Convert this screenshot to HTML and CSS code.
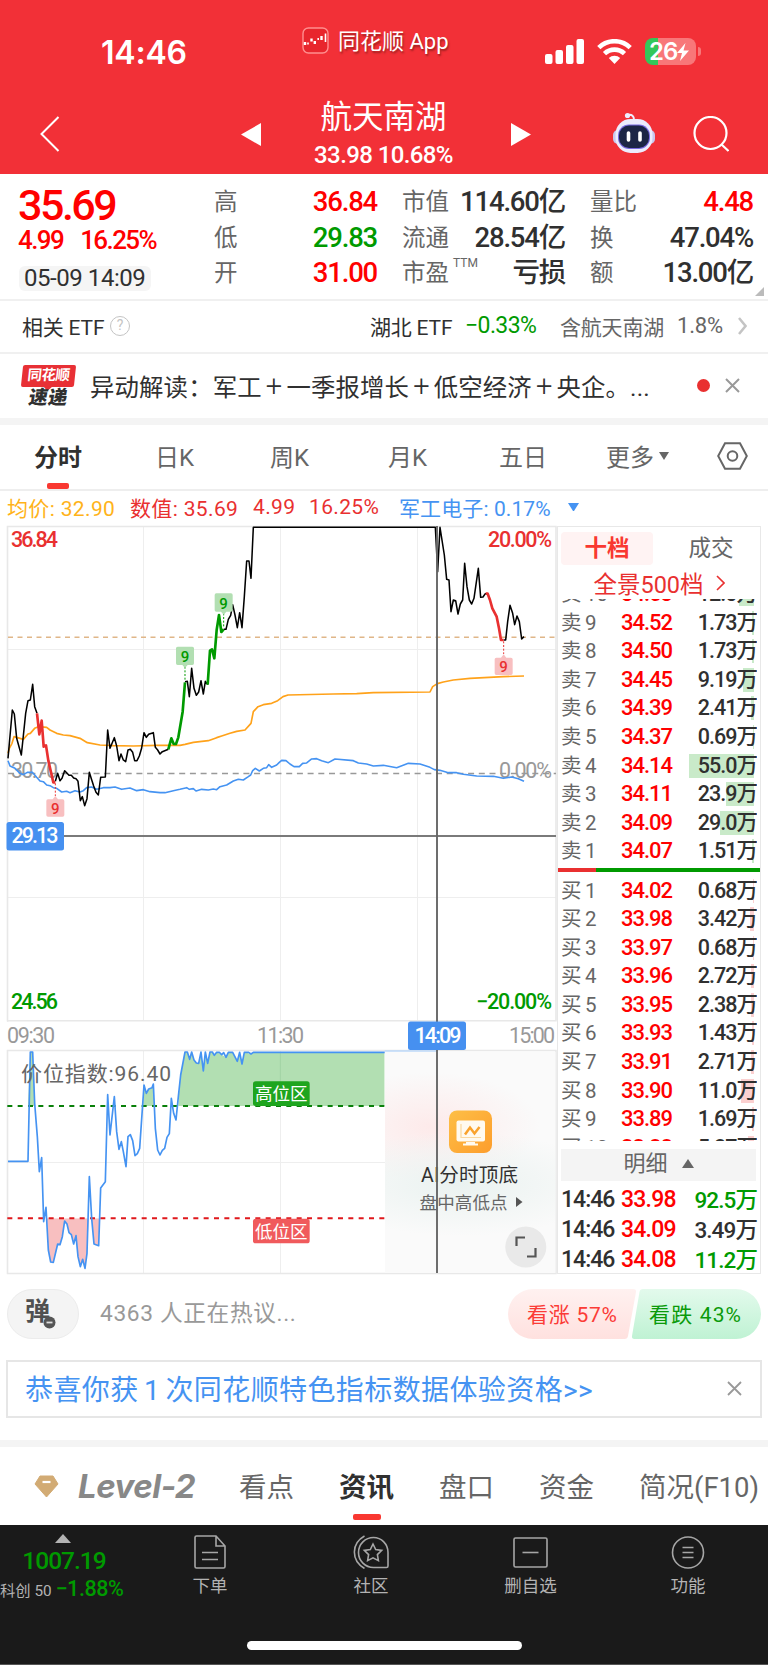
FILE: index.html
```html
<!DOCTYPE html>
<html lang="zh-CN">
<head>
<meta charset="utf-8">
<title>航天南湖</title>
<link rel="stylesheet" href="styles.css">
</head>
<body>
<div class="app">
  <header class="top">
    <div class="status">
      <span class="clock">14:46</span>
      <span class="brand">
        <svg width="27" height="27" viewBox="0 0 27 27"><rect x="1" y="1" width="25" height="25" rx="5.5" fill="#e8262d" stroke="#ff8f8f" stroke-width="1.4"/><path d="M3 18v-3M9.500 14.500v-3M12.800 17v-3M19.500 13V9" stroke="#fff" stroke-width="2.400"/><path d="M6 17.500v-2M16.200 13v-2M23.500 15V6.500" stroke="#fff" stroke-width="1.600"/></svg>
        <b>同花顺 App</b>
      </span>
      <svg class="signal" width="40" height="26" viewBox="0 0 40 26" fill="#fff"><rect x="0" y="15" width="7.500" height="10" rx="2"/><rect x="10.500" y="11" width="7.500" height="14" rx="2"/><rect x="21" y="6" width="7.500" height="19" rx="2"/><rect x="31.500" y="0" width="7.500" height="25" rx="2"/></svg>
      <svg class="wifi" width="35" height="25" viewBox="0 0 35 25" fill="none" stroke="#fff" stroke-width="4.600"><path d="M1.800 8.600a22.500 22.500 0 0 1 31.400 0"/><path d="M7.500 14.600a14.500 14.500 0 0 1 20 0"/><path d="M17.500 25l-5.700-6a8.500 8.500 0 0 1 11.400 0z" fill="#fff" stroke="none"/></svg>
      <span class="battery"><i>26</i><svg width="12" height="18" viewBox="0 0 12 18"><path d="M8.500 0L0 10h5l-2 8 9-10.500H6.500z" fill="#fff"/></svg></span>
    </div>
    <div class="nav">
      <svg width="20" height="36" viewBox="0 0 20 36" fill="none" stroke="#fff" stroke-width="2"><path d="M18.500 1L1.500 18l17 17"/></svg>
      <svg width="20" height="23" viewBox="0 0 20 23" fill="#fff"><path d="M20 0v23L0 11.500z"/></svg>
      <div class="title"><h1>航天南湖</h1><p class="num">33.98 10.68%</p></div>
      <svg width="20" height="23" viewBox="0 0 20 23" fill="#fff"><path d="M0 0v23l20-11.500z"/></svg>
      <svg class="bot" width="44" height="42" viewBox="0 0 44 42"><circle cx="15.500" cy="3.500" r="2.600" fill="#eef"/><path d="M16 3q6-1 6 5" fill="none" stroke="#eef" stroke-width="2"/><rect x="1" y="18" width="42" height="14" rx="5" fill="#c9c8ee"/><rect x="3.500" y="7" width="37" height="34" rx="15" fill="#ececfd"/><rect x="6" y="12.500" width="32" height="24.500" rx="11" fill="#7768df"/><rect x="7" y="13.500" width="30" height="22.500" rx="10" fill="#1c2545"/><path d="M16.500 21v7M28 21v7" stroke="#fff" stroke-width="3.600" stroke-linecap="round"/></svg>
      <svg width="36" height="37" viewBox="0 0 36 37" fill="none" stroke="#fff" stroke-width="2.200"><circle cx="17.500" cy="17" r="16"/><path d="M28.500 28.500l7 6.500"/></svg>
    </div>
  </header>

  <section class="quote">
    <div class="last"><strong class="num">35.69</strong><p class="num"><span>4.99</span><span>16.25%</span></p><time class="num">05-09 14:09</time></div>
    <dl class="stats c1">
      <dt>高</dt><dd class="up">36.84</dd><dt>低</dt><dd class="down">29.83</dd><dt>开</dt><dd class="up">31.00</dd>
    </dl>
    <dl class="stats c2">
      <dt>市值</dt><dd>114.60亿</dd><dt>流通</dt><dd>28.54亿</dd><dt>市盈<sup>TTM</sup></dt><dd>亏损</dd>
    </dl>
    <dl class="stats c3">
      <dt>量比</dt><dd class="up">4.48</dd><dt>换</dt><dd>47.04%</dd><dt>额</dt><dd>13.00亿</dd>
    </dl>
    <span class="corner"></span>
  </section>

  <section class="etf">
    <span class="name">相关 ETF</span><span class="help">?</span>
    <span class="fund">湖北 ETF</span><span class="down rate num">−0.33%</span>
    <span class="grey hold">含航天南湖</span><span class="grey pct">1.8%</span>
    <svg width="9" height="18" viewBox="0 0 9 18" fill="none" stroke="#c4c4c4" stroke-width="2.500"><path d="M1 1l6.500 8L1 17"/></svg>
  </section>

  <section class="flash">
    <div class="badge"><span>同花顺</span><b>速递</b></div>
    <p>异动解读：军工<i>+</i>一季报增长<i>+</i>低空经济<i>+</i>央企。...</p>
    <i class="dot"></i>
    <svg width="15" height="15" viewBox="0 0 15 15" stroke="#999" stroke-width="2"><path d="M1 1l13 13M14 1L1 14"/></svg>
  </section>

  <nav class="periods">
    <b class="on">分时</b><span>日K</span><span>周K</span><span>月K</span><span>五日</span><span class="more">更多<i></i></span>
    <svg width="31" height="28" viewBox="0 0 31 28" fill="none" stroke="#666" stroke-width="2"><path d="M8 1.200h15L29.800 14 23 26.800H8L1.200 14z"/><circle cx="15.500" cy="14" r="4.800"/></svg>
  </nav>

  <div class="legend"><span class="avg">均价: 32.90</span><span class="val">数值: 35.69</span><span class="val">4.99</span><span class="val">16.25%</span><span class="sector">军工电子: 0.17%</span><i></i></div>

  <main class="board">
    <svg class="chart" width="557" height="750" viewBox="0 525 557 750">
      <defs>
        <clipPath id="hi"><rect x="24" y="240" width="1130" height="168"/></clipPath>
        <clipPath id="lo"><rect x="24" y="745" width="1130" height="160"/></clipPath>
        <radialGradient id="pink"><stop offset="0" stop-color="#fdeaea"/><stop offset="1" stop-color="#fdeaea" stop-opacity="0"/></radialGradient>
        <radialGradient id="mint"><stop offset="0" stop-color="#eaf2f0"/><stop offset="1" stop-color="#eaf2f0" stop-opacity="0"/></radialGradient>
        <linearGradient id="amber" x2="1" y2="1"><stop offset="0" stop-color="#fdbf47"/><stop offset="1" stop-color="#fd9d2c"/></linearGradient>
      </defs>
      <path class="grid" d="M143.500 526V1021M280.500 526V1021M417.500 526V1021M7 649.500H556M7 897.500H556M143.500 1050V1273M280.500 1050V1273M7 1162.500H385"/>
      <path class="frame" d="M7.500 1021V526.500H556V1020.800H7zM556 1050.500H7.500V1273.500H556z"/>
      <path d="M8 637.300H556" stroke="#e0b688" stroke-width="1.400" stroke-dasharray="5 4.500"/>
      <path d="M8 773.500H556" stroke="#999" stroke-width="1.300" stroke-dasharray="6 4.700"/>
      <g class="axis mid"><text x="11" y="777.500" textLength="47">30.70</text><text x="499" y="777.500" textLength="53">0.00%</text></g>
      <g transform="translate(0 520) scale(.33333)" fill="none" stroke-width="4.600" stroke-linejoin="round">
        <polyline stroke="#ffa21a" stroke-width="5" points="24,700 28,685 36,670 42,650 50,652 70,658 84,642 91,640 104,625 115,620 140,622 150,630 170,640 190,645 210,647 240,655 262,668 300,675 340,677 400,678 470,676 540,676 555,673 580,667 625,662 650,653 665,648 690,640 710,634 735,630 753,610 760,575 774,560 790,554 815,550 833,542 849,530 864,525 1000,522 1070,521 1120,518 1290,516 1298,500 1312,491 1330,486 1360,480 1410,475 1510,470 1572,468"/>
        <polyline stroke="#4593f2" stroke-width="4.800" points="24,722 30,738 45,745 60,760 70,764 82,757 97,757 110,772 120,783 130,785 140,795 150,797 160,803 170,805 185,816 200,814 210,818 225,812 240,816 250,812 260,803 275,801 290,808 310,803 330,803 345,801 365,808 390,804 410,812 430,809 450,815 480,818 495,818 520,812 540,808 560,803 568,808 580,806 588,813 605,808 625,810 640,807 650,809 660,800 680,795 700,783 715,778 730,780 745,770 752,765 758,752 766,745 778,753 790,745 800,743 806,734 815,742 830,735 838,727 845,721 858,722 870,732 882,740 898,740 908,730 920,729 935,717 950,716 965,722 985,728 1005,717 1060,722 1075,729 1100,732 1120,738 1150,736 1190,743 1225,730 1260,732 1290,742 1303,749 1320,751 1345,758 1370,758 1390,763 1430,768 1480,769 1510,775 1535,771 1555,776 1572,784"/>
        <polyline stroke="#000" points="24,715 37,570 43,582 50,655 64,705 77,580 84,542 91,540 98,493 104,560 111,580"/>
        <polyline stroke="#000" points="166,784 173,760 180,782 186,775 194,752 207,766 214,766 221,774 228,776 234,784 241,842 247,830 254,857 261,836 268,757 274,776 281,798 288,817 295,825 302,772 316,771 323,630 330,685 343,653 350,678 357,722 363,702 370,720 377,725 384,690 391,688 398,697 404,722 411,722 418,708 425,684 432,638 439,652 446,643 460,638 466,682 473,690 480,702 487,695 505,688"/>
        <polyline stroke="#000" points="555,485 562,484 568,530 575,445 582,505 589,526 596,516 603,482 610,522 616,484 623,494"/>
        <polyline stroke="#000" points="671,328 678,328 685,298 692,286 698,254 705,285 712,323 719,278 726,323 733,230 740,123 747,123 753,175 760,22 1306,22 1313,155 1320,22 1333,105 1340,178 1347,180 1353,275 1360,240 1367,242 1374,282 1381,252 1388,240 1394,130 1401,200 1408,240 1415,252 1422,235 1435,145 1442,232 1449,231 1456,221 1463,221"/>
        <polyline stroke="#000" points="1511,360 1517,360 1523,305 1530,256 1538,280 1544,314 1551,288 1558,305 1565,357 1572,350"/>
        <g stroke="#e93030" stroke-width="8"><polyline points="111,580 118,643 125,602 131,680 138,676 145,722 160,787 166,787"/><polyline points="1457,221 1463,221 1470,240 1477,265 1490,290 1497,325 1503,360 1511,360"/></g>
        <g stroke="#009a00" stroke-width="8"><polyline points="505,688 514,655 521,672 528,672 535,652 548,575 555,487"/><polyline points="623,494 630,392 636,388 643,415 650,330 657,285 664,336 671,328"/></g>
        <path d="M555 440v44M671 280v44" stroke="#009a00" stroke-width="3" stroke-dasharray="6 5"/>
        <path d="M166 790v38M1511 364v38" stroke="#e93030" stroke-width="3" stroke-dasharray="6 5"/>
        <path fill="#b2dfb2" d="M533 380h44q5 0 5 5v45q0 5-5 5h-14l-8 9-8-9h-14q-5 0-5-5v-45q0-5 5-5zM649 220h44q5 0 5 5v45q0 5-5 5h-14l-8 9-8-9h-14q-5 0-5-5v-45q0-5 5-5z"/>
        <path fill="#f8bfc0" d="M144 890h44q5 0 5-5v-42q0-5-5-5h-14l-8-10-8 10h-14q-5 0-5 5v42q0 5 5 5zM1489 465h44q5 0 5-5v-42q0-5-5-5h-14l-8-10-8 10h-14q-5 0-5 5v42q0 5 5 5z"/>
      </g>
      <g class="nine"><text x="185" y="661.500" fill="#009a00">9</text><text x="223.600" y="608.500" fill="#009a00">9</text><text x="55.300" y="814" fill="#e93030">9</text><text x="503.500" y="672" fill="#e93030">9</text></g>
      <g class="axis edge"><text x="11" y="546.500" textLength="47" fill="#e93030">36.84</text><text x="488" y="546.500" textLength="64" fill="#e93030">20.00%</text><text x="11" y="1008.500" textLength="47" fill="#009a00">24.56</text><text x="476" y="1008.500" textLength="76" fill="#009a00">−20.00%</text></g>
      <g class="axis time"><text x="7" y="1042.500" textLength="48">09:30</text><text x="257" y="1042.500" textLength="47">11:30</text><text x="509" y="1042.500" textLength="46">15:00</text></g>

      <g transform="translate(0 970) scale(.33333)">
        <g>
          <polygon clip-path="url(#hi)" fill="#b2dfb2" points="24,408 84,408 91,246 98,246 104,408 419,408 429,408 432,345 439,370 446,357 456,353 460,342 463,408 535,408 537,370 542,315 555,246 562,246 569,268 575,246 582,270 589,279 596,280 603,246 610,303 616,246 623,280 630,246 637,246 643,256 650,247 665,254 678,262 685,247 698,247 712,274 719,247 726,282 733,247 753,252 760,247 1154,247 1154,408"/>
          <polygon clip-path="url(#lo)" fill="#f8bfc0" points="141,745 145,840 152,876 160,877 173,822 180,824 187,800 194,753 201,762 207,788 214,794 221,822 228,797 234,860 241,890 248,868 255,895 261,850 266,745 275,745 282,822 296,827 299,745"/>
        </g>
        <path d="M841 246V408" stroke="#a2d3a4" stroke-width="3"/>
        <path d="M22 408H1154" stroke="#0a800a" stroke-width="6" stroke-dasharray="15 16"/>
        <path d="M22 745H1154" stroke="#e0181c" stroke-width="6" stroke-dasharray="15 16"/>
        <path d="M1154 243H1312" stroke="#bcd9f8" stroke-width="4"/>
        <polyline fill="none" stroke="#4593f2" stroke-width="5" stroke-linejoin="round" points="24,574 84,574 91,246 98,246 104,400 112,500 118,605 125,563 131,755 138,712 145,840 152,876 160,877 173,822 180,824 187,800 194,753 201,762 207,788 214,794 221,822 228,797 234,860 241,890 248,868 255,895 261,850 268,620 275,745 282,822 296,827 302,654 316,635 323,374 330,495 343,380 350,485 357,538 364,515 370,545 378,590 384,500 391,494 398,512 405,557 412,551 419,535 432,345 439,370 446,357 456,353 460,342 466,475 473,540 480,555 487,541 494,535 501,502 508,491 514,385 521,430 528,450 535,380 542,315 555,246 562,246 569,268 575,246 582,270 589,279 596,280 603,246 610,303 616,246 623,280 630,246 637,246 643,256 650,247 658,247 665,254 671,248 678,262 685,247 698,247 712,274 719,247 726,282 733,247 746,247 753,252 760,247 1154,247"/>
        <rect x="759" y="334" width="170" height="74" rx="8" fill="#1fa51f"/>
        <rect x="759" y="746" width="170" height="74" rx="8" fill="#f05a5c"/>
      </g>
      <text class="idx" x="21" y="1080.500" textLength="150">价位指数:96.40</text>
      <g class="zone"><text x="281.300" y="1100">高位区</text><text x="281.300" y="1237.500">低位区</text></g>

      <rect x="385" y="1052" width="170.500" height="221" fill="#fafafa"/>
      <svg class="glow" x="385" y="1052" width="170.500" height="221" viewBox="0 0 170.500 221"><ellipse cx="45" cy="75" rx="110" ry="55" fill="url(#pink)"/><ellipse cx="75" cy="132" rx="150" ry="52" fill="url(#mint)"/></svg>
      <rect x="449" y="1110.500" width="43" height="42.500" rx="8" fill="url(#amber)"/>
      <rect x="456.500" y="1120.500" width="28.500" height="21" rx="2" fill="#fffaf0"/>
      <path d="M466 1142h9v1.500h3v2h-15v-2h3z" fill="#fffaf0"/>
      <path d="M461 1124v13.500h20" fill="none" stroke="#fbd9a0" stroke-width="1.200"/>
      <path d="M465 1134.500l5-7 4.500 6 5-6.500" fill="none" stroke="#f9a22d" stroke-width="2.500"/>
      <text class="ai" x="421" y="1182" textLength="97">AI分时顶底</text>
      <text class="ai2" x="419.500" y="1208.500" textLength="88">盘中高低点</text>
      <path d="M516 1197l6.500 5-6.500 5z" fill="#555"/>
      <circle cx="525.800" cy="1247" r="20.500" fill="#e9e9e9"/>
      <path d="M516.500 1246v-8.500h8.500M527 1256.500h8.500V1248" fill="none" stroke="#555" stroke-width="2.200"/>

      <path d="M7 836H556" stroke="#7a7a7a" stroke-width="1.900"/>
      <path d="M437 526V1273" stroke="#666" stroke-width="1.900"/>
      <rect x="6.500" y="822" width="57.500" height="28.500" rx="2.500" fill="#4690f0"/>
      <rect x="408" y="1021.500" width="58" height="28.500" rx="2.500" fill="#4690f0"/>
      <g class="axis tag"><text x="11.500" y="843" textLength="47">29.13</text><text x="414.500" y="1042.500" textLength="47">14:09</text></g>
    </svg>

    <aside class="book">
      <div class="switch"><b>十档</b><span>成交</span></div>
      <a class="all">全景500档<svg width="9" height="16" viewBox="0 0 9 16" fill="none" stroke="#e93030" stroke-width="1.600"><path d="M1 1l7 7-7 7"/></svg></a>
      <div class="asks">
        <p><span>卖 10</span><b>34.53</b><em><i style="width:15px"></i>12.0万</em></p>
        <p><span>卖 9</span><b>34.52</b><em><i style="width:2px"></i>1.73万</em></p>
        <p><span>卖 8</span><b>34.50</b><em><i style="width:2px"></i>1.73万</em></p>
        <p><span>卖 7</span><b>34.45</b><em><i style="width:11px"></i>9.19万</em></p>
        <p><span>卖 6</span><b>34.39</b><em><i style="width:3px"></i>2.41万</em></p>
        <p><span>卖 5</span><b>34.37</b><em><i style="width:1px"></i>0.69万</em></p>
        <p><span>卖 4</span><b>34.14</b><em><i style="width:65px"></i>55.0万</em></p>
        <p><span>卖 3</span><b>34.11</b><em><i style="width:28px"></i>23.9万</em></p>
        <p><span>卖 2</span><b>34.09</b><em><i style="width:34px"></i>29.0万</em></p>
        <p><span>卖 1</span><b>34.07</b><em><i style="width:2px"></i>1.51万</em></p>
      </div>
      <div class="ratio"><i></i></div>
      <div class="bids">
        <p><span>买 1</span><b>34.02</b><em><i style="width:1px"></i>0.68万</em></p>
        <p><span>买 2</span><b>33.98</b><em><i style="width:4px"></i>3.42万</em></p>
        <p><span>买 3</span><b>33.97</b><em><i style="width:1px"></i>0.68万</em></p>
        <p><span>买 4</span><b>33.96</b><em><i style="width:3px"></i>2.72万</em></p>
        <p><span>买 5</span><b>33.95</b><em><i style="width:3px"></i>2.38万</em></p>
        <p><span>买 6</span><b>33.93</b><em><i style="width:2px"></i>1.43万</em></p>
        <p><span>买 7</span><b>33.91</b><em><i style="width:3px"></i>2.71万</em></p>
        <p><span>买 8</span><b>33.90</b><em><i style="width:13px"></i>11.0万</em></p>
        <p><span>买 9</span><b>33.89</b><em><i style="width:2px"></i>1.69万</em></p>
        <p><span>买 10</span><b>33.88</b><em><i style="width:6px"></i>5.27万</em></p>
      </div>
      <div class="detail">明细<i></i></div>
      <div class="ticks">
        <p><span>14:46</span><b>33.98</b><em class="down">92.5万</em></p>
        <p><span>14:46</span><b>34.09</b><em>3.49万</em></p>
        <p><span>14:46</span><b>34.08</b><em class="down">11.2万</em></p>
      </div>
    </aside>
  </main>

  <section class="talk">
    <div class="danmu">弹<svg width="13" height="13" viewBox="0 0 13 13"><circle cx="6.500" cy="6.500" r="6" fill="#555"/><path d="M3.500 6.500h6" stroke="#ddd" stroke-width="1.800"/></svg></div>
    <span class="count">4363 人正在热议...</span>
    <svg class="vote" width="253" height="50" viewBox="0 0 253 50">
      <defs><linearGradient id="vr" x2="0" y2="1"><stop offset="0" stop-color="#fff1f0"/><stop offset="1" stop-color="#ffe1df"/></linearGradient><linearGradient id="vg" x2="0" y2="1"><stop offset="0" stop-color="#e3faec"/><stop offset="1" stop-color="#bff2d3"/></linearGradient></defs>
      <path d="M25 0h100q3.500 0 3 3l-8 44q-.5 3-3.500 3H25a25 25 0 0 1 0-50z" fill="url(#vr)"/>
      <path d="M228 0h-93q-3 0-3.500 3l-7.500 44q-.5 3 2.500 3H228a25 25 0 0 0 0-50z" fill="url(#vg)"/>
      <text x="19" y="32.500" textLength="90" fill="#fb3b36">看涨 57%</text><text x="141" y="32.500" textLength="92" fill="#0a9a0a">看跌 43%</text>
    </svg>
  </section>

  <section class="notice"><span>恭喜你获 1 次同花顺特色指标数据体验资格&gt;&gt;</span><svg width="15" height="15" viewBox="0 0 15 15" stroke="#999" stroke-width="1.800"><path d="M1 1l13 13M14 1L1 14"/></svg></section>

  <nav class="sections">
    <svg class="gem" width="25" height="23" viewBox="0 0 25 23"><path d="M6 1h13l5 8-11.500 13L1 9z" fill="#d2ab74" stroke="#d2ab74" stroke-linejoin="round"/><path d="M8.500 7h8" stroke="#fff" stroke-width="2.200"/></svg>
    <i class="lv">Level-2</i><span>看点</span><b class="on">资讯</b><span>盘口</span><span>资金</span><span class="f10">简况(F10)</span>
  </nav>

  <footer class="tabbar">
    <div class="index"><i></i><strong class="num">1007.19</strong><p>科创 50 <span class="num">−1.88%</span></p></div>
    <div class="item"><svg width="32" height="34" viewBox="0 0 32 34"><path d="M22 1H2.500Q1 1 1 2.500v29Q1 33 2.500 33h27q1.500 0 1.500-1.500V11zM22 1v10h9M8 17.500h16M8 24.500h16"/></svg>下单</div>
    <div class="item"><svg width="36" height="34" viewBox="0 0 36 34"><path d="M20.500 2.500a15 15 0 0 0 0 30H33.500q1.500 0 1.500-1.500V17.500A14.500 15 0 0 0 20.500 2.500zM11.500 1C-2 8.500-2 25.500 11.500 33.500M20 9l2.700 5.500 6 .9-4.300 4.200 1 6-5.400-2.800-5.400 2.800 1-6-4.300-4.200 6-.9z"/></svg>社区</div>
    <div class="item"><svg width="35" height="34" viewBox="0 0 35 34"><rect x="1" y="3" width="33" height="29" rx="1.500"/><path d="M9.500 17.500h16"/></svg>删自选</div>
    <div class="item"><svg width="34" height="34" viewBox="0 0 34 34"><circle cx="17" cy="17.500" r="15.500"/><path d="M11.500 12.500h11M11.500 17.500h11M11.500 22.500h11"/></svg>功能</div>
    <span class="home"></span>
  </footer>
</div>
</body>
</html>
```

FILE: styles.css
```css
* { box-sizing: border-box; }
body, h1, p, dl, dd { margin: 0; }
body { width: 768px; background: #fff; color: #303030; font-family: Roboto, "Noto Sans CJK SC", sans-serif; }
svg { display: block; flex: none; }
i, em { font-style: normal; }
.app { height: 1665px; display: flex; flex-direction: column; overflow: hidden; }
.app > * { flex: none; }
.num { font-weight: 500; letter-spacing: -.03em; }
.up { color: #f00; }
.down { color: #009a00 !important; }

.top { height: 174px; background: #f23037; color: #fff; }
.status { height: 90px; padding: 0 68px 0 101px; display: grid; grid-template-columns: 201px 243px 52px 48px 56px; align-items: start; }
.clock { margin-top: 33px; font: 600 32px/40px Inter, sans-serif; letter-spacing: -.2px; }
.brand { margin-top: 27px; display: flex; gap: 9px; height: 27px; align-items: center; white-space: nowrap; }
.brand b { margin-top: -4px; font-weight: 400; font-size: 22px; text-shadow: 1px 2px 2px #9c2020; }
.signal { margin-top: 39px; }
.wifi { margin-top: 39px; }
.battery { position: relative; margin-top: 38px; width: 51px; height: 27px; border-radius: 8px; display: flex; align-items: center; padding-left: 4px; background: linear-gradient(90deg, #33c759 0 13px, #f87779 13px); }
.battery i { font: 600 24px/27px Inter, sans-serif; letter-spacing: -1px; }
.battery::after { content: ""; position: absolute; right: -5px; top: 9px; width: 3px; height: 9px; border-radius: 0 3px 3px 0; background: #f87779; }
.nav { height: 84px; padding-left: 40px; display: grid; grid-template-columns: 201px 55px 215px 101px 81px 40px; align-items: center; }
.nav > svg:nth-of-type(n) { margin-top: 4px; }
.nav > .bot:nth-of-type(n) { margin-top: 1px; }
.title { width: 175px; text-align: center; }
.title h1 { font-size: 31.500px; line-height: 38px; font-weight: 400; margin-top: 3px; }
.title p { font-size: 24px; line-height: 28px; margin-top: 4px; letter-spacing: -.6px; }

.quote { position: relative; height: 127px; padding: 10px 15px 0 18px; display: grid; grid-template-columns: 196px 188px 188px 163px; border-bottom: 2px solid #f0f0f0; }
.c1 { width: 163px; }
.last { color: #f00; }
.last strong { display: block; font-size: 43px; line-height: 42px; letter-spacing: -2.500px; }
.last p { font-size: 26px; line-height: 30px; margin-top: -1px; letter-spacing: -1.600px; display: flex; gap: 17px; }
.last time { display: inline-block; margin: 11px 0 0 1px; height: 25px; line-height: 25px; font-size: 24px; color: #303030; background: #f5f5f5; border-radius: 6px; padding: 0 6px 0 5px; letter-spacing: -.45px; font-weight: 400; }
.stats { display: grid; grid-template-columns: 50px 1fr; grid-auto-rows: 35.500px; line-height: 36px; }
.stats dt { font-size: 23.500px; color: #666; white-space: nowrap; }
.stats dd { text-align: right; font-size: 27.500px; font-weight: 500; letter-spacing: -1.200px; white-space: nowrap; }
.c2 { width: 163px; }
.stats sup { font-size: 12px; line-height: 0; vertical-align: 14px; margin-left: 4px; }
.corner { position: absolute; right: 4px; bottom: 3px; border-left: 9px solid transparent; border-bottom: 9px solid #bbb; }

.etf { height: 53px; border-bottom: 2px solid #f0f0f0; display: grid; grid-template-columns: 88px 260px 95px 95px 117px 61px 9px; padding: 0 0 2px 22px; align-items: center; font-size: 21px; letter-spacing: -.2px; white-space: nowrap; }
.help { width: 20px; height: 20px; border: 1.500px solid #c4c4c4; border-radius: 50%; color: #c4c4c4; font-size: 14px; line-height: 17px; text-align: center; }
.etf .rate { font-size: 23px; letter-spacing: -.6px; font-weight: 400; }
.grey { color: #666; }
.pct { font-size: 22px; }

.flash { height: 71px; border-bottom: 7px solid #f4f4f4; display: grid; grid-template-columns: 68px 607px 28px 15px; padding: 0 0 2px 22px; align-items: center; }
.flash p { font-size: 24.400px; white-space: nowrap; letter-spacing: .15px; }
.flash p i { display: inline-block; width: 24.600px; text-align: center; font-size: 29px; line-height: 20px; font-weight: 300; }
.badge { width: 53px; text-align: center; line-height: 21px; margin-top: 2px; }
.badge span { position: relative; display: block; height: 22px; border-radius: 2px; background: #e83035; color: #fff; font-size: 14.500px; font-weight: 700; transform: skewX(-6deg); letter-spacing: -.5px; }
.badge span::after { content: ""; position: absolute; left: 23px; top: 22px; border: 4px solid transparent; border-top-color: #e83035; }
.badge b { display: block; font-size: 19px; font-weight: 900; transform: skewX(-10deg); letter-spacing: .5px; }
.dot { width: 13px; height: 13px; border-radius: 50%; background: #e93030; }

.periods { height: 66px; border-bottom: 2px solid #eee; display: grid; grid-template-columns: 121px 115px 118px 111px 107px 111px 31px; padding: 0 0 3px 34px; align-items: center; font-size: 24px; color: #666; }
.on { position: relative; color: #303030; }
.on::after { content: ""; position: absolute; left: 13px; bottom: -16px; width: 22px; height: 6px; border-radius: 2px; background: #f93831; }
.more { display: flex; align-items: center; gap: 5px; }
.more i { border: 5.500px solid transparent; border-top: 8px solid #666; border-bottom: 0; }

.legend { height: 34px; padding: 0 0 2px 7px; display: grid; grid-template-columns: 123px 123px 56px 90px 169px 11px; align-items: center; font-size: 21px; letter-spacing: .35px; white-space: nowrap; }
.avg { color: #ffb31a; }
.val { color: #e93030; }
.sector { color: #4593f2; letter-spacing: .1px; }
.legend i { border: 5.500px solid transparent; border-top: 8px solid #4593f2; border-bottom: 0; }

.board { display: grid; grid-template-columns: 557px 205px; height: 750px; }
.glow { overflow: hidden; }
.grid { stroke: #eee; fill: none; }
.frame { stroke: #e8e8e8; stroke-width: 1.600; fill: none; }
.axis { font-size: 21.500px; letter-spacing: 0; }
.edge { font-weight: 500; }
.mid { fill: #999; }
.time { fill: #999; }
.tag { fill: #fff; font-weight: 500; }
.nine { font-size: 15px; font-weight: 500; text-anchor: middle; }
.idx { font-size: 21px; fill: #666; }
.zone { font-size: 17.500px; fill: #fff; text-anchor: middle; }
.ai { font-size: 19.600px; fill: #303030; }
.ai2 { font-size: 17.500px; fill: #666; }

.book { border: 1.500px solid #e8e8e8; margin: 1px 0; width: 204px; height: 748px; padding: 5px 3px 0; }
.book p { display: grid; grid-template-columns: 60px 70px 1fr; height: 28.600px; line-height: 28.600px; font-size: 22px; white-space: nowrap; }
.book p span { color: #666; font-size: 20.500px; word-spacing: -1.500px; }
.book p b { color: #f00; font-weight: 500; letter-spacing: -1px; }
.book p em { position: relative; text-align: right; font-weight: 500; letter-spacing: -1px; font-size: 21.500px; }
.book em i { position: absolute; right: 3px; top: 2px; height: 24px; background: #c9eac9; z-index: -1; }
.book .bids em i { background: #fbd0d0; }
.switch { display: grid; grid-template-columns: 92px 1fr; height: 33px; line-height: 32px; text-align: center; font-size: 22.500px; color: #666; }
.switch b { background: #fff3f3; color: #f93831; border-radius: 4px; }
.switch span { padding-left: 12px; }
.all { display: flex; align-items: center; justify-content: center; gap: 12px; height: 32px; margin-top: 2px; font-size: 23.500px; color: #e93030; white-space: nowrap; }
.asks { height: 268px; padding-bottom: 1px; overflow: hidden; display: flex; flex-direction: column; justify-content: flex-end; }
.asks p, .bids p { flex: none; }
.ratio { height: 3.500px; margin: 1px -3px 0; background: #009a00; }
.ratio i { display: block; width: 38px; height: 100%; background: #e93030; }
.bids { height: 269px; padding-top: 5px; overflow: hidden; }
.detail { margin: 8px 1px 0 0; height: 32px; background: #f4f4f4; color: #666; font-size: 22px; line-height: 28px; padding-bottom: 2px; display: flex; align-items: center; justify-content: center; gap: 14px; }
.detail i { border: 6px solid transparent; border-bottom: 9px solid #666; border-top: 0; }
.ticks { padding-top: 4px; }
.book .ticks p { height: 30.300px; line-height: 30.300px; }
.book .ticks p span { color: #303030; font-size: 23px; letter-spacing: -1px; font-weight: 500; }
.book .ticks p b { font-size: 23px; letter-spacing: -.8px; }
.book .ticks p em { font-size: 22.500px; letter-spacing: -.9px; }

.talk { height: 85px; padding: 14px 7px 0; display: flex; align-items: flex-start; line-height: 50px; }
.danmu { position: relative; width: 72px; height: 50px; border-radius: 25px; background: #f4f4f4; border: 1.500px solid #ececec; font-size: 25px; font-weight: 700; color: #505050; padding-left: 17px; line-height: 44px; }
.danmu svg { position: absolute; left: 35px; top: 26px; }
.count { margin-left: 21px; color: #999; font-size: 22.700px; letter-spacing: .65px; flex: 1; line-height: 50px; }
.vote { font-size: 21px; }
.notice { height: 58px; margin: 0 6px 22px; border: 2px solid #e6e6e6; padding: 0 18px 2px 17px; display: flex; align-items: center; justify-content: space-between; color: #4593f2; font-size: 28px; white-space: nowrap; word-spacing: -2px; letter-spacing: .4px; }
.sections { height: 85px; border-top: 7px solid #f4f4f4; display: grid; grid-template-columns: 44px 161px 100px 100px 100px 100px 1fr; padding: 0 0 3px 34px; align-items: center; font-size: 27.500px; color: #666; white-space: nowrap; }
.gem { margin-top: 4px; }
.lv { font: italic 700 33px/1 Inter, sans-serif; color: #888; letter-spacing: -.5px; margin-top: 3px; }
.sections .on::after { left: 14px; bottom: -15px; width: 28px; }
.tabbar { position: relative; height: 140px; background: #1a1a1a; border-bottom: 1px solid #555; color: #b3b3b3; display: grid; grid-template-columns: 132px 156px 166px 153px 162px; align-items: start; }
.index { text-align: center; white-space: nowrap; }
.index i { display: block; width: 16px; margin: 9px auto 0 55px; border: 8px solid transparent; border-bottom: 9px solid #b3b3b3; border-top: 0; }
.index strong { display: block; width: 128px; font-size: 24.500px; line-height: 36px; color: #009a00; letter-spacing: -1px; }
.index p { text-align: left; font-size: 15.300px; line-height: 20px; }
.index p span { font-size: 21.500px; color: #009a00; letter-spacing: -.4px; }
.item { display: flex; flex-direction: column; align-items: center; padding-top: 10px; font-size: 17.500px; line-height: 34px; }
.item svg { fill: none; stroke: #a6a6a6; stroke-width: 1.600; }
.home { position: absolute; left: 247px; bottom: 14px; width: 275px; height: 9px; border-radius: 5px; background: #fff; }
```
